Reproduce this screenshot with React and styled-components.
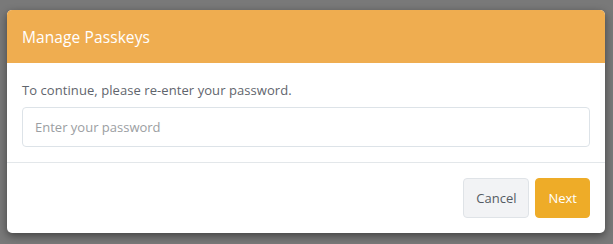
import React from "react";
import styled, { createGlobalStyle } from "styled-components";

const Global = createGlobalStyle`
  html, body { margin: 0; padding: 0; }
  body { background: #7a7a7a; font-family: "Open Sans", "Liberation Sans", sans-serif; }
`;

const Backdrop = styled.div`
  width: 613px;
  height: 244px;
  box-sizing: border-box;
  padding: 10px 8px 11px 7px;
  background: #797979;
`;

const Dialog = styled.div`
  background: #fff;
  border-radius: 5px;
  overflow: hidden;
  box-shadow: 0 3px 8px rgba(0, 0, 0, 0.45);
  display: flex;
  flex-direction: column;
`;

const Header = styled.div`
  background: #efad50;
  height: 53px;
  display: flex;
  align-items: center;
  padding: 0 15px;
  color: #fff;
  font-size: 15.5px;
  letter-spacing: 0.1px;
`;

const Body = styled.div`
  padding: 18px 15px 15px;
  border-bottom: 1px solid #e3e7ea;
  display: flex;
  flex-direction: column;
  gap: 8px;
`;

const Label = styled.div`
  color: #5f656d;
  font-size: 13px;
  line-height: 18px;
  letter-spacing: 0.07px;
`;

const Input = styled.input`
  height: 40px;
  box-sizing: border-box;
  border: 1px solid #dde3e8;
  border-radius: 4px;
  padding: 0 12px;
  font-family: inherit;
  font-size: 13px;
  color: #333;
  outline: none;
  &::placeholder { color: #9b9ea2; }
`;

const Footer = styled.div`
  display: flex;
  justify-content: flex-end;
  gap: 6px;
  padding: 15px 15px 15px;
`;

const Button = styled.button`
  height: 40px;
  padding: 0 12px;
  border-radius: 4px;
  font-family: inherit;
  font-size: 13px;
  border: 1px solid ${(p) => (p.$primary ? "#eeac28" : "#dfe3e7")};
  background: ${(p) => (p.$primary ? "#eeac28" : "#f2f3f5")};
  color: ${(p) => (p.$primary ? "#fff" : "#555b63")};
  cursor: pointer;
`;

export default function App() {
  return (
    <>
      <Global />
      <Backdrop>
        <Dialog>
          <Header>Manage Passkeys</Header>
          <Body>
            <Label>To continue, please re-enter your password.</Label>
            <Input type="password" placeholder="Enter your password" />
          </Body>
          <Footer>
            <Button>Cancel</Button>
            <Button $primary>Next</Button>
          </Footer>
        </Dialog>
      </Backdrop>
    </>
  );
}
